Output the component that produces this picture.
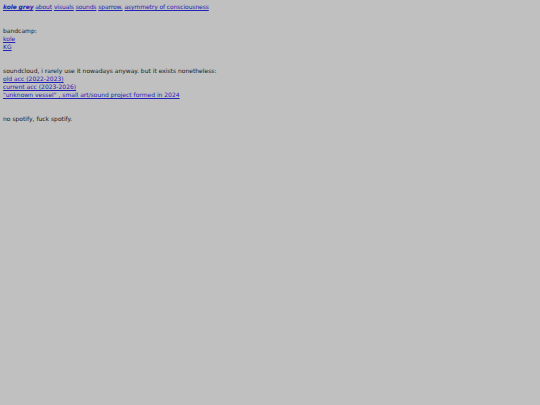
export default function App() {
  const a = "text-[#2222b8] underline";
  return (
    <div className="min-h-[405px] bg-[#c0c0c0] text-[#1a1a1a] text-[6px] leading-[8px] px-[3px] pt-[3px]" style={{ fontFamily: '"DejaVu Sans", Verdana, sans-serif' }}>
      <div className="tracking-[-0.1px]">
        <a className={a + " font-bold italic"} href="#">kole grey</a>{" "}
        <a className={a} href="#">about</a>{" "}
        <a className={a} href="#">visuals</a>{" "}
        <a className={a} href="#">sounds</a>{" "}
        <a className={a} href="#">sparrow.</a>{" "}
        <a className={a} href="#">asymmetry of consciousness</a>
      </div>
      <div className="h-[16px]" />
      <div>bandcamp:</div>
      <div><a className={a} href="#">kole</a></div>
      <div><a className={a} href="#">KG</a></div>
      <div className="h-[16px]" />
      <div>soundcloud, i rarely use it nowadays anyway. but it exists nonetheless:</div>
      <div><a className={a} href="#">old acc (2022-2023)</a></div>
      <div><a className={a} href="#">current acc (2023-2026)</a></div>
      <div><a className={a} href="#">"unknown vessel" , small art/sound project formed in 2024</a></div>
      <div className="h-[16px]" />
      <div>no spotify, fuck spotify.</div>
    </div>
  );
}
